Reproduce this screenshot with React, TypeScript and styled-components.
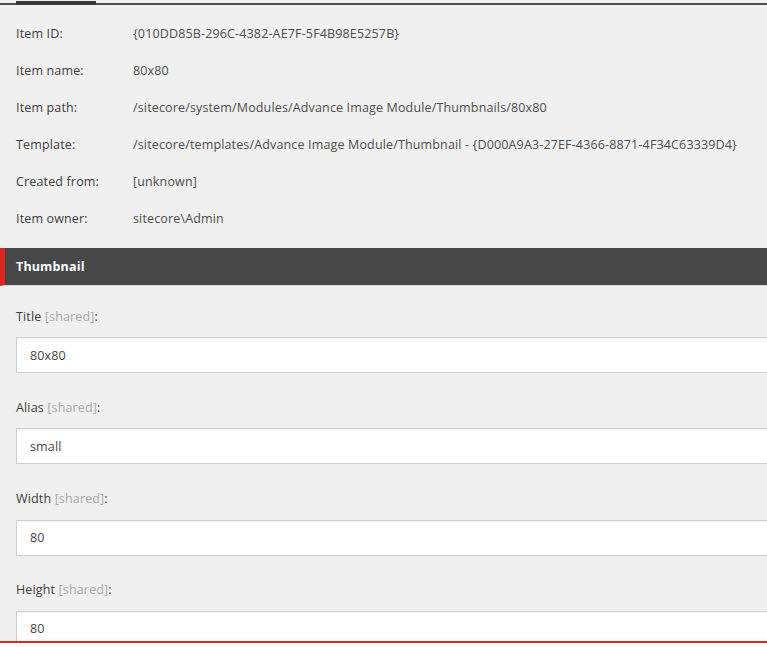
import React from "react";
import styled, { createGlobalStyle } from "styled-components";

const GlobalStyle = createGlobalStyle`
  html, body {
    margin: 0;
    padding: 0;
    background: #ffffff;
    overflow: hidden;
  }
  body {
    font-family: "Open Sans", "Liberation Sans", Arial, sans-serif;
    font-size: 12.5px;
    letter-spacing: 0.15px;
    color: #474747;
  }
`;

const Page = styled.div`
  width: 767px;
  height: 647px;
  display: flex;
  flex-direction: column;
  background: #ffffff;
`;

const Editor = styled.div`
  height: 643px;
  display: flex;
  flex-direction: column;
  background: #f0f0f0;
  overflow: hidden;
  border-bottom: 2px solid #dc291e;
  box-sizing: border-box;
  flex-shrink: 0;
`;

const TabStrip = styled.div`
  height: 5px;
  flex-shrink: 0;
  display: flex;
  align-items: flex-end;
  padding-left: 16px;
  border-bottom: 2px solid #505050;
  box-sizing: border-box;
`;

const ActiveTab = styled.div`
  width: 80px;
  height: 2px;
  margin-bottom: -2px;
  border-top: 2px solid #3a3a3a;
  background: #3a3a3a;
  box-sizing: content-box;
`;

const InfoTable = styled.div`
  display: grid;
  grid-template-columns: 117px 1fr;
  grid-auto-rows: 37px;
  align-items: center;
  padding: 10px 0 11px 16px;
`;

const InfoLabel = styled.div`
  color: #3c3c3c;
  white-space: nowrap;
`;

const InfoValue = styled.div`
  color: #4d4d4d;
  white-space: nowrap;
`;

const SectionHeader = styled.div`
  height: 37px;
  flex-shrink: 0;
  display: flex;
  align-items: center;
  padding-left: 11px;
  background: #474747;
  border-left: 5px solid #dc291e;
  border-bottom: 1px solid #dcdcdc;
  color: #ffffff;
  font-weight: 700;
  box-sizing: content-box;
`;

const Fields = styled.div`
  display: flex;
  flex-direction: column;
  gap: 25.8px;
  padding: 21.5px 0 0 16px;
`;

const Field = styled.div`
  display: flex;
  flex-direction: column;
  gap: 11.5px;
`;

const FieldLabel = styled.div`
  line-height: 18px;
  color: #3c3c3c;
`;

const Shared = styled.span`
  color: #a8a8a8;
`;

const Input = styled.div`
  height: 36px;
  display: flex;
  align-items: center;
  padding-left: 13px;
  background: #ffffff;
  border: 1px solid #cfcfcf;
  border-right: none;
  box-shadow: inset 0 1px 1px rgba(0, 0, 0, 0.05);
  box-sizing: border-box;
  color: #474747;
`;

const info: [string, string][] = [
  ["Item ID:", "{010DD85B-296C-4382-AE7F-5F4B98E5257B}"],
  ["Item name:", "80x80"],
  ["Item path:", "/sitecore/system/Modules/Advance Image Module/Thumbnails/80x80"],
  [
    "Template:",
    "/sitecore/templates/Advance Image Module/Thumbnail - {D000A9A3-27EF-4366-8871-4F34C63339D4}",
  ],
  ["Created from:", "[unknown]"],
  ["Item owner:", "sitecore\\Admin"],
];

const fields: [string, string][] = [
  ["Title", "80x80"],
  ["Alias", "small"],
  ["Width", "80"],
  ["Height", "80"],
];

const App: React.FC = () => {
  return (
    <>
      <GlobalStyle />
      <Page>
        <Editor>
          <TabStrip>
            <ActiveTab />
          </TabStrip>

          <InfoTable>
            {info.map(([label, value]) => (
              <React.Fragment key={label}>
                <InfoLabel>{label}</InfoLabel>
                <InfoValue>{value}</InfoValue>
              </React.Fragment>
            ))}
          </InfoTable>

          <SectionHeader>Thumbnail</SectionHeader>

          <Fields>
            {fields.map(([label, value]) => (
              <Field key={label}>
                <FieldLabel>
                  {label} <Shared>[shared]</Shared>:
                </FieldLabel>
                <Input>{value}</Input>
              </Field>
            ))}
          </Fields>
        </Editor>
      </Page>
    </>
  );
};

export default App;
